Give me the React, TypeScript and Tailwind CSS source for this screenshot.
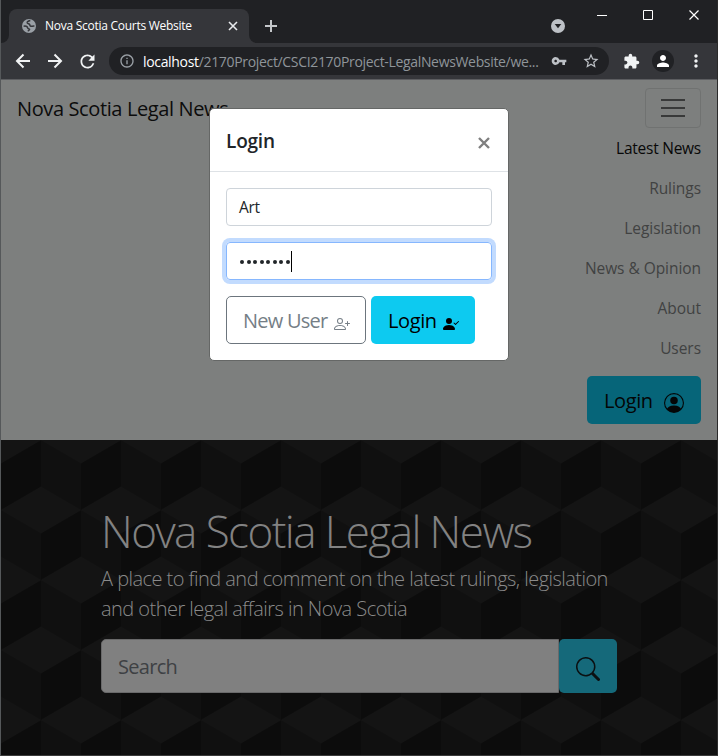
import React from "react";
import { BsPersonCircle, BsPersonPlus, BsPersonCheckFill, BsSearch } from "react-icons/bs";
import {
  MdInfoOutline,
  MdVpnKey,
  MdStarBorder,
  MdExtension,
  MdPerson,
  MdMoreVert,
  MdRefresh,
} from "react-icons/md";

function Globe() {
  return (
    <svg className="size-[14px] shrink-0" viewBox="0 0 14 14">
      <circle cx="7" cy="7" r="7" fill="#9aa0a6" />
      <path
        d="M8.300 1.600C6.500 2 5 2.700 5.200 3.900c.2 1 1.700.7 2.300 1.400.6.700.2 1.700 1.300 2 1.200.3 2.200-.5 3.600-.1M1.600 7.200c1.300-.2 2.900-.1 3.500.6.600.8.400 1.500 1.200 1.900.6.300 1.400.1 1.300.8-.1.600-.9.900-1.800 1.700"
        fill="none"
        stroke="#35363a"
        strokeWidth="1.5"
      />
    </svg>
  );
}

function Arrow({ d }: { d: string }) {
  return (
    <svg className="size-5" viewBox="0 0 20 20" fill="none" stroke="#f1f3f4" strokeWidth="2">
      <path d={d} />
    </svg>
  );
}

function TabStrip() {
  return (
    <div className="flex h-[43px] shrink-0 bg-[#202124]">
      <div className="flex w-2 items-end bg-[#35363a]">
        <div className="h-full w-2 rounded-br-lg bg-[#202124]" />
      </div>
      <div className="mt-[9px] flex h-[34px] w-[240px] items-center rounded-t-lg bg-[#35363a] pl-[13px] pr-[11px]">
        <Globe />
        <span className="ml-[9px] whitespace-nowrap text-[12px] tracking-[-0.27px] text-white">
          Nova Scotia Courts Website
        </span>
        <svg className="ml-auto size-[10px]" viewBox="0 0 10 10" stroke="#e8eaed" strokeWidth="1.6">
          <path d="M1 1l8 8M9 1l-8 8" />
        </svg>
      </div>
      <div className="w-2 bg-[#35363a]">
        <div className="h-full w-2 rounded-bl-lg bg-[#202124]" />
      </div>
      <svg className="ml-[8px] mt-[20px] size-3" viewBox="0 0 12 12" stroke="#c4c7ca" strokeWidth="2">
        <path d="M6 0v12M0 6h12" />
      </svg>
      <svg className="ml-auto mt-[19px] size-[14px]" viewBox="0 0 14 14">
        <circle cx="7" cy="7" r="7" fill="#bdc1c6" />
        <path d="M3.700 5h6.600L7 9.200z" fill="#202124" />
      </svg>
      <svg className="ml-[32px] mt-[10px] h-[11px] w-[103px]" viewBox="0 0 103 11" fill="none" stroke="#fff">
        <path d="M0 5.500h10M46.500 .5h9v9h-9z" />
        <path d="M92.500 .5l9 9M101.500 .5l-9 9" strokeWidth="1.2" />
      </svg>
      <div className="w-[17px]" />
    </div>
  );
}

function Toolbar() {
  return (
    <div className="flex h-[37px] shrink-0 items-center border-b border-[#5c5d60] bg-[#35363a] pl-[12px] text-[#f1f3f4]">
      <Arrow d="M17 10H4.500M10.500 3.500L4 10l6.500 6.500" />
      <div className="w-3" />
      <Arrow d="M3 10h12.500M9.500 3.500L16 10l-6.500 6.500" />
      <MdRefresh className="ml-3 size-[21px]" />
      <div className="ml-[11px] flex h-7 w-[500px] items-center rounded-full bg-[#202124] pl-[10px]">
        <MdInfoOutline className="size-4 shrink-0 text-[#9aa0a6]" />
        <span className="ml-[8px] whitespace-nowrap text-[14px] tracking-[-0.33px] text-[#8f959a]">
          <span className="text-white">localhost</span>/2170Project/CSCI2170Project-LegalNewsWebsite/we...
        </span>
        <MdVpnKey className="ml-auto size-4 shrink-0 text-[#bdc1c6]" />
        <MdStarBorder className="ml-[15px] mr-[9px] size-[18px] shrink-0 text-[#bdc1c6]" />
      </div>
      <MdExtension className="ml-[14px] size-[17px]" />
      <div className="ml-[12px] flex size-[22px] items-center justify-center rounded-full bg-[#202124]">
        <MdPerson className="size-[18px] text-white" />
      </div>
      <MdMoreVert className="ml-[12px] size-5" />
    </div>
  );
}

const links = ["Latest News", "Rulings", "Legislation", "News & Opinion", "About", "Users"];

function Navbar() {
  return (
    <nav className="flex h-[360px] shrink-0 flex-col bg-[#7d7f7e] px-4 pt-2">
      <div className="flex h-10 items-center justify-between">
        <span className="whitespace-nowrap pt-[2px] text-[20px] leading-[30px] tracking-[-0.38px] text-[#0c0c0c]">
          Nova Scotia Legal News
        </span>
        <div className="flex h-10 w-14 flex-col items-center justify-center gap-[6px] rounded border border-[#707271]">
          <div className="h-0.5 w-6 bg-[#383939]" />
          <div className="h-0.5 w-6 bg-[#383939]" />
          <div className="h-0.5 w-6 bg-[#383939]" />
        </div>
      </div>
      <ul className="flex flex-col items-end">
        {links.map((label, i) => (
          <li
            key={label}
            className={`flex h-10 items-center whitespace-nowrap pt-px text-[15.500px] ${i === 0 ? "tracking-[-0.25px] text-[#080808]" : "tracking-[-0.05px] text-[#414242]"}`}
          >
            {label}
          </li>
        ))}
      </ul>
      <button className="mt-2 flex h-12 w-[114px] items-center self-end rounded-[5px] bg-[#066579] pl-[17px] text-[20px] tracking-[-0.4px] text-[#040606]">
        <span className="pt-[2px]">Login</span>
        <BsPersonCircle className="ml-auto mr-[17px] mt-[6px] size-5" />
      </button>
    </nav>
  );
}

function CubePattern() {
  return (
    <svg className="absolute inset-0 size-full">
      <defs>
        <pattern id="cubes" width="80" height="140" patternUnits="userSpaceOnUse" patternTransform="translate(0 70)">
          <rect width="80" height="140" fill="#101010" />
          <path
            fill="#0c0c0c"
            d="M40 23.300L80 0V46.700L40 70zM0 93.300L40 70V116.700L0 140z"
          />
          <path
            fill="#141414"
            d="M0 0H80L40 23.300zM0 140L40 116.700L80 140zM80 46.700V93.300L40 70zM0 46.700V93.300L40 70z"
          />
        </pattern>
      </defs>
      <rect width="100%" height="100%" fill="url(#cubes)" />
    </svg>
  );
}

function Hero() {
  return (
    <section className="relative min-h-0 flex-1 overflow-hidden">
      <CubePattern />
      <div className="relative ml-[100px] w-[516px] pt-[65px] text-[#828282]">
        <h1 className="whitespace-nowrap text-[44px] font-light leading-[53px] tracking-[-1.57px]">
          Nova Scotia Legal News
        </h1>
        <p className="mt-[6px] whitespace-nowrap text-[20px] font-light leading-[30px] tracking-[-0.54px] text-[#8a8a8a]">
          <span className="block">A place to find and comment on the latest rulings, legislation</span>
          <span className="block">and other legal affairs in Nova Scotia</span>
        </p>
        <div className="mt-[15px] flex h-[54px]">
          <div className="flex flex-1 items-center rounded-l-[5px] border border-[#69696a] bg-[#808080] pl-4 pt-[2px] text-[20px] tracking-[-0.7px] text-[#3e4144]">
            Search
          </div>
          <div className="flex w-[58px] items-center justify-center rounded-[5px] bg-[#15697a] pt-[6px]">
            <BsSearch className="size-6 text-[#0b1012]" />
          </div>
        </div>
      </div>
    </section>
  );
}

function LoginModal() {
  return (
    <div className="absolute left-[208px] top-[108px] flex h-[253px] w-[300px] flex-col rounded-[5px] border border-[#656766] bg-white text-[#212529]">
      <div className="flex h-[63px] items-center justify-between border-b border-[#dee2e6] pl-4 pr-[18px]">
        <h5 className="pt-[2px] text-[19px] font-semibold leading-[30px] tracking-[-0.2px]">Login</h5>
        <svg className="mt-[5px] size-3" viewBox="0 0 12 12" stroke="#7f7f7f" strokeWidth="2.4">
          <path d="M1 1l10 10M11 1l-10 10" />
        </svg>
      </div>
      <div className="flex flex-col gap-4 p-4">
        <div className="flex h-[38px] items-center rounded border border-[#ced4da] px-3 pt-px text-[15.500px] tracking-[-0.3px]">
          Art
        </div>
        <div className="flex h-[38px] items-center rounded border border-[#86b7fe] px-[13px] ring-4 ring-[#c2dbfe]">
          <div className="flex gap-[2.500px] pt-px">
            {Array.from({ length: 8 }, (_, i) => (
              <span key={i} className="size-1 rounded-full bg-[#212529]" />
            ))}
          </div>
          <div className="ml-px h-[21px] w-px bg-black" />
        </div>
        <div className="flex gap-[5px]">
          <button className="flex h-12 w-[140px] items-center whitespace-nowrap rounded-[5px] border border-[#6c757d] pl-4 text-[20px] tracking-[-0.75px] text-[#757e86]">
            <span className="pt-[2px]">New User</span>
            <BsPersonPlus className="ml-auto mr-[15px] mt-[7px] size-4" />
          </button>
          <button className="flex h-12 w-[104px] items-center rounded-[5px] bg-[#0dcaf0] pl-[17px] text-[20px] tracking-[-0.4px] text-black">
            <span className="pt-[2px]">Login</span>
            <BsPersonCheckFill className="ml-auto mr-4 mt-[7px] size-4" />
          </button>
        </div>
      </div>
    </div>
  );
}

export default function App() {
  return (
    <div className="relative flex h-[756px] w-[718px] flex-col overflow-hidden border-b border-l border-r border-b-[#3a3a3a] border-l-[#55585a] border-r-[#2a2a2a] bg-[#202124] font-['Open_Sans','Noto_Sans',sans-serif]">
      <TabStrip />
      <Toolbar />
      <Navbar />
      <Hero />
      <LoginModal />
    </div>
  );
}
